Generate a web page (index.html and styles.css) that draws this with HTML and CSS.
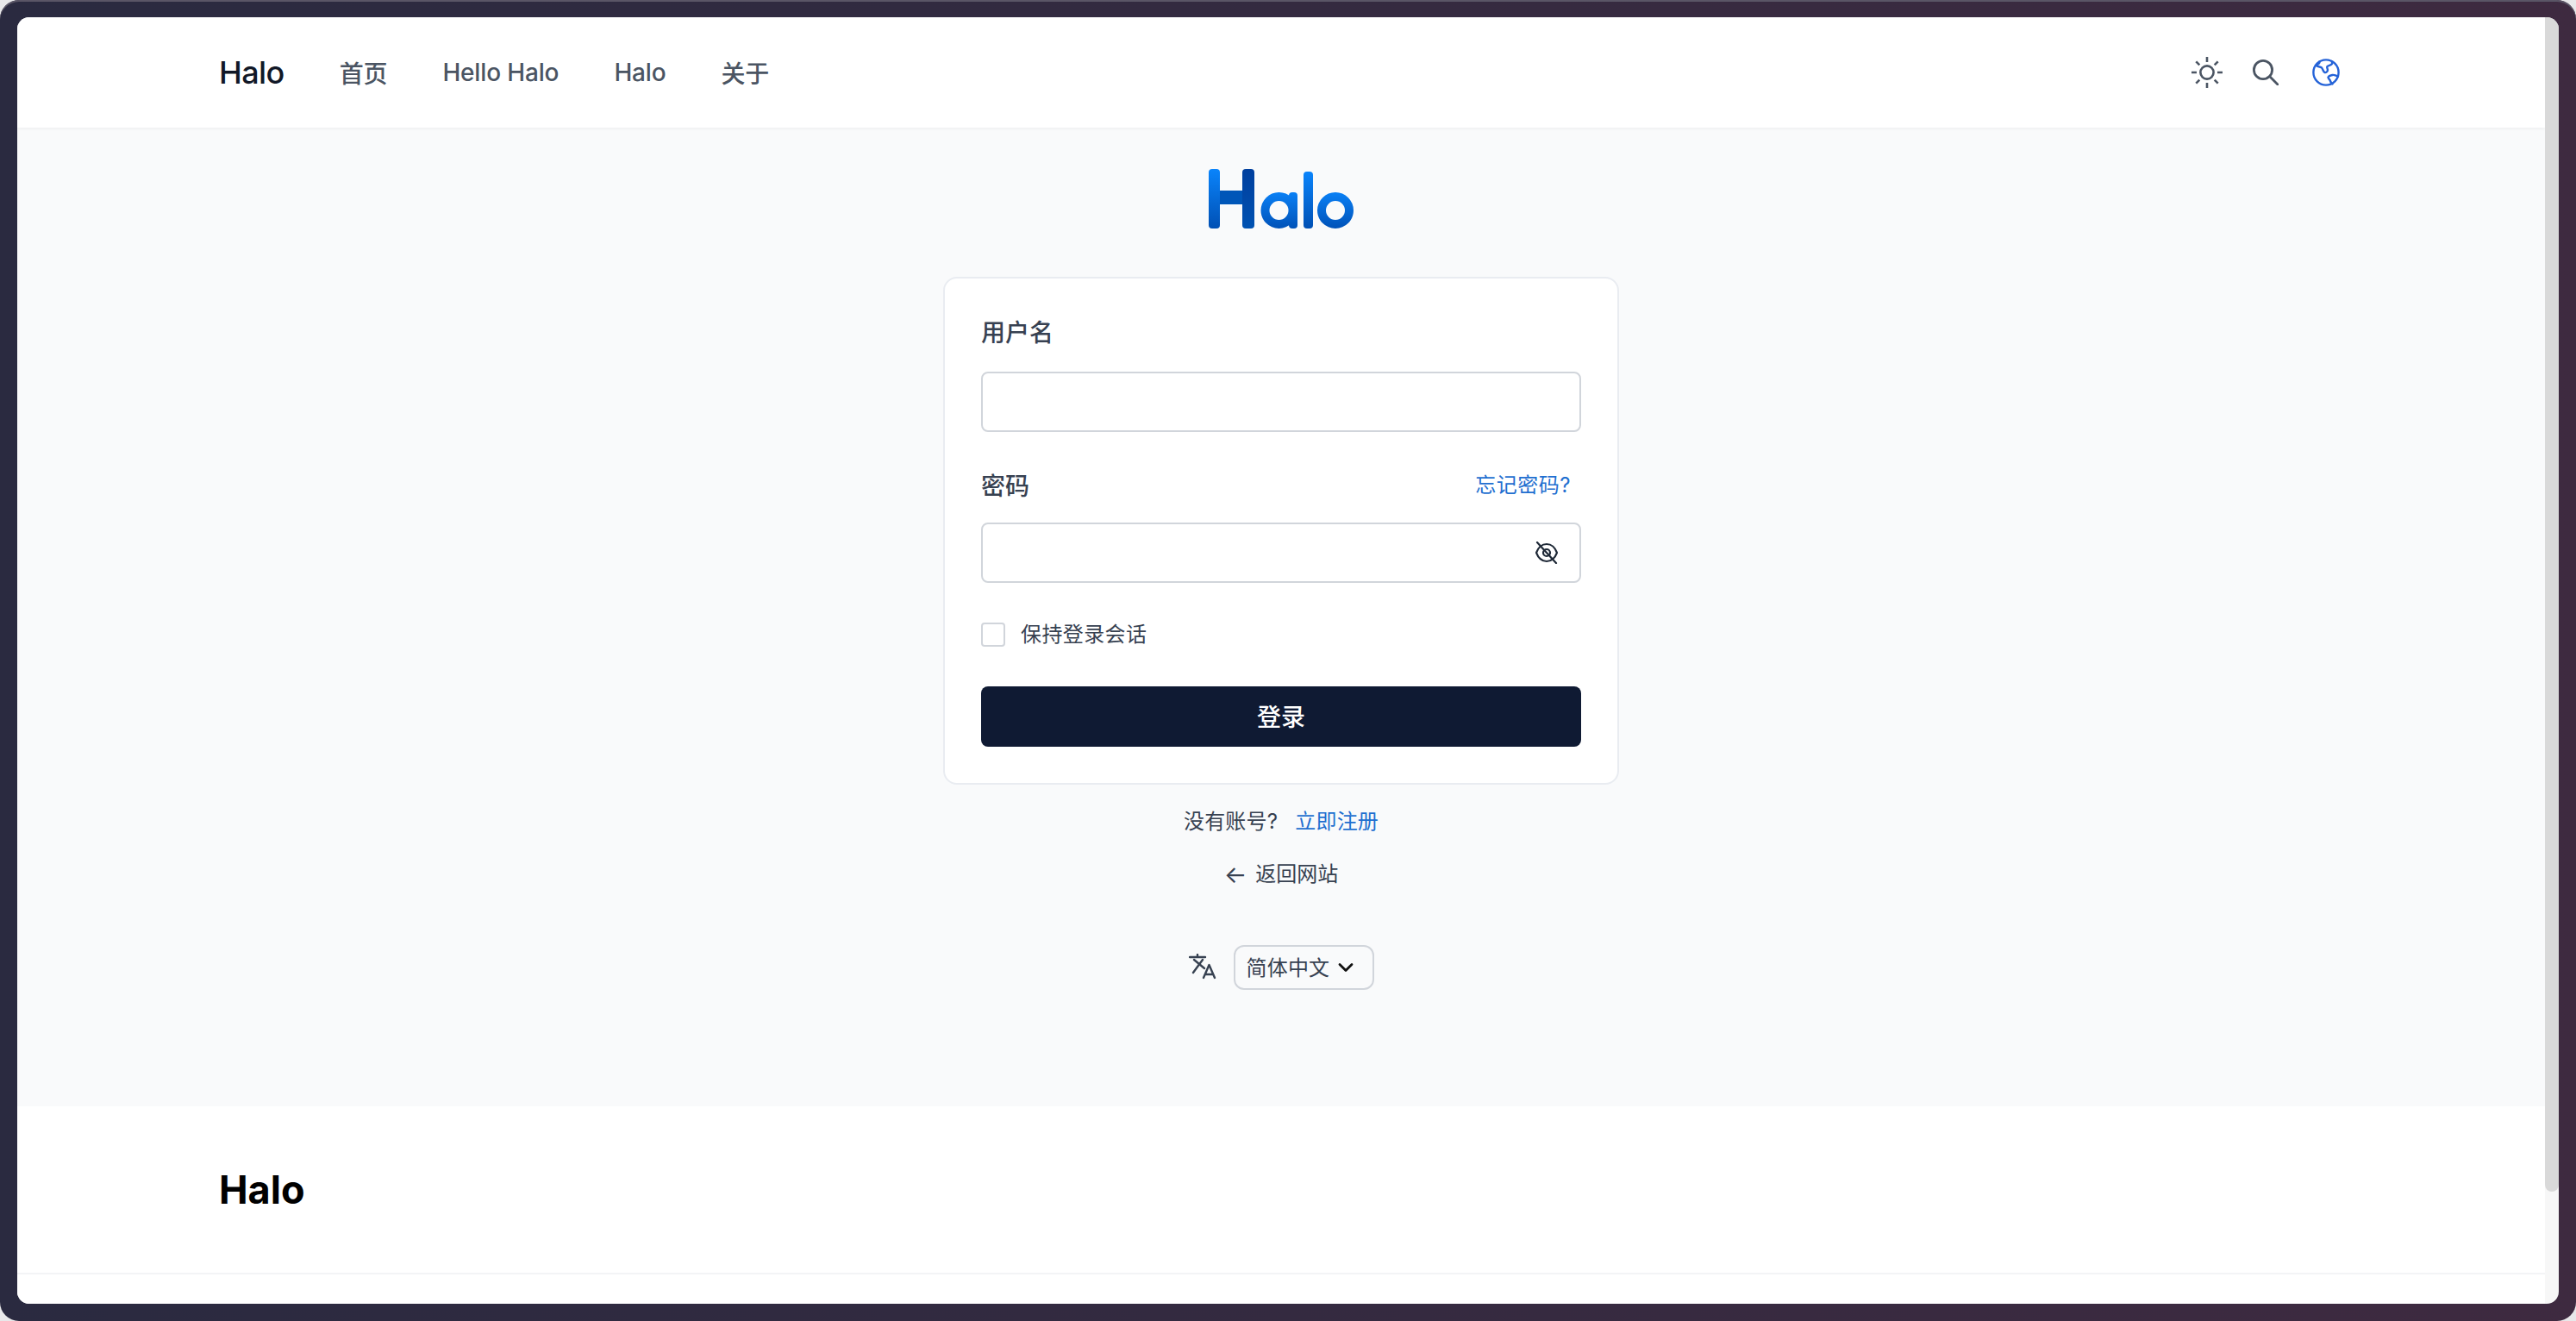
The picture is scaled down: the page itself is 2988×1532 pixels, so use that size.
FILE: index.html
```html
<!DOCTYPE html>
<html lang="zh-CN">
<head>
<meta charset="utf-8">
<title>Halo</title>
<link rel="stylesheet" href="styles.css">
</head>
<body>
<div class="window">
  <div class="page">
    <header class="header">
      <div class="container header-row">
        <nav class="nav">
          <a class="brand">Halo</a>
          <a class="nav-link">首页</a>
          <a class="nav-link">Hello Halo</a>
          <a class="nav-link">Halo</a>
          <a class="nav-link">关于</a>
        </nav>
        <div class="tools">
          <svg class="tool-sun" viewBox="0 0 36 36" fill="none" stroke="#4b5563" stroke-width="2.6">
            <circle cx="18" cy="18" r="7.6"/>
            <path d="M18 0v6M18 30v6M0 18h6M30 18h6M5.300 5.300l4 4M26.700 26.700l4 4M5.300 30.700l4-4M26.700 9.300l4-4"/>
          </svg>
          <svg class="tool-search" viewBox="0 0 30 30" fill="none" stroke="#4b5563" stroke-width="2.8" stroke-linecap="round">
            <circle cx="12" cy="12" r="10.600"/>
            <path d="M19.800 19.800L29 29"/>
          </svg>
          <svg class="tool-globe" viewBox="0 0 32 32" fill="none" stroke="#2563d8" stroke-width="2.4" stroke-linejoin="round" stroke-linecap="round">
            <circle cx="16" cy="16" r="14.600"/>
            <path d="M8.500 3.500c.5 2-2 3-4 4.500 1.500 1.500 4.500 1 6.500 2.500 1.500 1.500 1.500 4.500 3.500 5.500 2 .5 3.500-1.500 3.500-3 0-1.500-1.500-2.500-.5-4 1.500-1.500 4-1 5.500-3 .5-1 0-2-.5-3"/>
            <path d="M30 20.500c-2.500-.5-4-2-6.500-1.500-2 .5-4 .5-5 2.500 0 2 2 2.500 2.500 4.500.5 1.500 1.500 2.500 2.500 3.500"/>
          </svg>
        </div>
      </div>
    </header>

    <main class="main">
      <svg class="logo" viewBox="0 0 168 69">
        <defs>
          <linearGradient id="lg" x1="0" y1="0" x2="0" y2="1">
            <stop offset="0" stop-color="#0a84fb"/>
            <stop offset="1" stop-color="#0050b4"/>
          </linearGradient>
          <linearGradient id="lgs" gradientUnits="userSpaceOnUse" x1="0" y1="27" x2="0" y2="69">
            <stop offset="0" stop-color="#0a80f5"/>
            <stop offset="1" stop-color="#0052b8"/>
          </linearGradient>
          <linearGradient id="ld" x1="0" y1="0" x2="0" y2="1">
            <stop offset="0" stop-color="#003f9e"/>
            <stop offset="1" stop-color="#0052b2"/>
          </linearGradient>
        </defs>
        <rect x="0" y="0" width="13" height="69" rx="4" fill="url(#lg)"/>
        <rect x="39" y="0" width="14" height="69" rx="4" fill="url(#ld)"/>
        <rect x="13" y="25" width="26" height="16" fill="#0056b8"/>
        <circle cx="81.500" cy="48" r="16" fill="none" stroke="url(#lgs)" stroke-width="10"/>
        <rect x="93" y="27" width="10" height="42" rx="4" fill="url(#lgs)"/>
        <rect x="110" y="3" width="11" height="66" rx="4" fill="url(#lg)"/>
        <circle cx="147" cy="48" r="16" fill="none" stroke="url(#lgs)" stroke-width="10"/>
      </svg>

      <form class="card">
        <label class="field-label">用户名</label>
        <div class="input"></div>
        <div class="label-row">
          <label class="field-label">密码</label>
          <a class="forgot">忘记密码?</a>
        </div>
        <div class="input input-password">
          <svg class="eye" viewBox="0 0 26 26" fill="none" stroke="#1f2937" stroke-width="2.200" stroke-linecap="round">
            <path d="M1 13c2-5.500 6.500-10 12-10s10 4.500 12 10c-2 5.500-6.500 10-12 10s-10-4.500-12-10z"/>
            <circle cx="13" cy="13" r="4"/>
            <path d="M2 1l22 24"/>
          </svg>
        </div>
        <div class="remember">
          <span class="checkbox"></span>
          <span class="remember-text">保持登录会话</span>
        </div>
        <button class="submit" type="button">登录</button>
      </form>

      <div class="signup">
        <span>没有账号?</span>
        <a class="link">立即注册</a>
      </div>
      <div class="back">
        <span class="arrow">←</span>
        <span>返回网站</span>
      </div>
      <div class="lang">
        <svg class="lang-icon" viewBox="0 0 32 32" fill="none" stroke="#374151" stroke-width="2.400" stroke-linecap="round" stroke-linejoin="round">
          <path d="M1 4h18M10 1v3M16 7L5 22M6 7l12 10"/>
          <path d="M17 28l6.500-15L30 28M19 24h9"/>
        </svg>
        <div class="select">
          <span>简体中文</span>
          <svg class="chev" viewBox="0 0 18 12" fill="none" stroke="#111" stroke-width="2.800" stroke-linecap="round" stroke-linejoin="round">
            <path d="M2 2.500l7 7 7-7"/>
          </svg>
        </div>
      </div>
    </main>

    <footer class="footer">
      <div class="container footer-title">Halo</div>
      <div class="footer-rule"></div>
    </footer>
  </div>
  <div class="scrollbar"><div class="thumb"></div></div>
</div>
</body>
</html>
```
FILE: styles.css
```css
* { box-sizing: border-box; }
html, body { margin: 0; padding: 0; height: 100%; }
body {
  width: 2988px;
  height: 1532px;
  overflow: hidden;
  background: #e8e8ea;
  font-family: Inter, "Noto Sans CJK SC", sans-serif;
}
.window {
  width: 2988px;
  height: 1532px;
  padding: 20px;
  display: flex;
  border-radius: 22px;
  background: linear-gradient(90deg, #2a2a40 0%, #3e2a40 100%);
  box-shadow: inset 0 2px 0 #5a5566;
}
.page {
  flex: 1;
  display: flex;
  flex-direction: column;
  background: #fff;
  border-radius: 14px 0 0 14px;
  overflow: hidden;
}
.scrollbar {
  width: 16px;
  background: #f7f7f7;
  border-radius: 0 14px 14px 0;
  overflow: hidden;
}
.thumb {
  height: 1362px;
  background: #d9d9d9;
  border-radius: 0 0 8px 8px;
}
.container {
  width: 2560px;
  margin: 0 auto;
  padding: 0 48px;
}
.header {
  height: 128px;
  flex: none;
  position: relative;
  z-index: 1;
  background: #fff;
  box-shadow: 0 1px 4px rgba(0, 0, 0, 0.06);
  display: flex;
  align-items: center;
}
.header-row {
  display: flex;
  align-items: center;
  justify-content: space-between;
}
.nav {
  display: flex;
  align-items: center;
  gap: 64px;
}
.brand {
  font-size: 36px;
  font-weight: 500;
  letter-spacing: -0.6px;
  color: #111827;
}
.nav-link {
  font-size: 28px;
  font-weight: 500;
  letter-spacing: -0.15px;
  color: #4b5563;
}
.tools {
  display: flex;
  align-items: center;
  padding-right: 4px;
}
.tool-sun { width: 36px; height: 36px; display: block; }
.tool-search { width: 30px; height: 30px; display: block; margin-left: 35px; }
.tool-globe { width: 32px; height: 32px; display: block; margin-left: 39px; }
.main {
  flex: 1;
  background: #f9fafb;
  display: flex;
  flex-direction: column;
  align-items: center;
  padding-top: 48px;
}
.logo { width: 168px; height: 69px; display: block; }
.card {
  width: 784px;
  height: 589px;
  margin-top: 56px;
  padding: 45px 42px 0;
  background: #fff;
  border: 2px solid #e9ecf1;
  border-radius: 16px;
  display: flex;
  flex-direction: column;
}
.field-label {
  font-size: 28px;
  line-height: 36px;
  font-weight: 500;
  color: #374151;
}
.input {
  height: 70px;
  margin-top: 27px;
  background: #fff;
  border: 2px solid #d1d5db;
  border-radius: 8px;
}
.label-row {
  margin-top: 45px;
  display: flex;
  align-items: flex-start;
  justify-content: space-between;
  padding-right: 12px;
}
.forgot {
  font-size: 24px;
  line-height: 34px;
  letter-spacing: 0.5px;
  color: #1f6fd0;
}
.input-password {
  margin-top: 24px;
  display: flex;
  align-items: center;
  justify-content: flex-end;
  padding-right: 25px;
}
.eye { width: 26px; height: 26px; display: block; }
.remember {
  margin-top: 46px;
  display: flex;
  align-items: center;
  gap: 18px;
  font-size: 24px;
  line-height: 28px;
  color: #374151;
}
.remember-text { letter-spacing: 0.4px; }
.checkbox {
  width: 28px;
  height: 28px;
  background: #fff;
  border: 2px solid #d1d5db;
  border-radius: 4px;
}
.submit {
  height: 70px;
  margin-top: 46px;
  padding: 0 0 3px;
  border: 0;
  border-radius: 8px;
  background: #0f1a33;
  color: #fff;
  font: 500 28px Inter, "Noto Sans CJK SC", sans-serif;
}
.signup {
  margin-top: 26px;
  display: flex;
  align-items: center;
  gap: 20px;
  font-size: 24px;
  line-height: 34px;
  letter-spacing: 0.2px;
  color: #374151;
}
.link { color: #1f6fd0; }
.back {
  margin-top: 27px;
  display: flex;
  align-items: center;
  gap: 10px;
  font-size: 24px;
  line-height: 34px;
  color: #374151;
}
.arrow { font-size: 28px; line-height: 34px; }
.lang {
  margin-top: 65px;
  display: flex;
  align-items: center;
  gap: 20px;
}
.lang-icon { width: 32px; height: 32px; display: block; }
.select {
  width: 163px;
  height: 52px;
  padding: 0 0 3px 13px;
  display: flex;
  align-items: center;
  gap: 10px;
  border: 2px solid #d1d5db;
  border-radius: 12px;
  font-size: 24px;
  letter-spacing: 0.2px;
  color: #374151;
}
.chev { width: 18px; height: 12px; display: block; margin-top: 3px; }
.footer {
  height: 229px;
  flex: none;
  background: #fff;
}
.footer-title {
  height: 193px;
  display: flex;
  align-items: center;
  font-size: 45px;
  font-weight: 700;
  color: #000;
}
.footer-rule { height: 2px; background: #f3f4f6; }
```
